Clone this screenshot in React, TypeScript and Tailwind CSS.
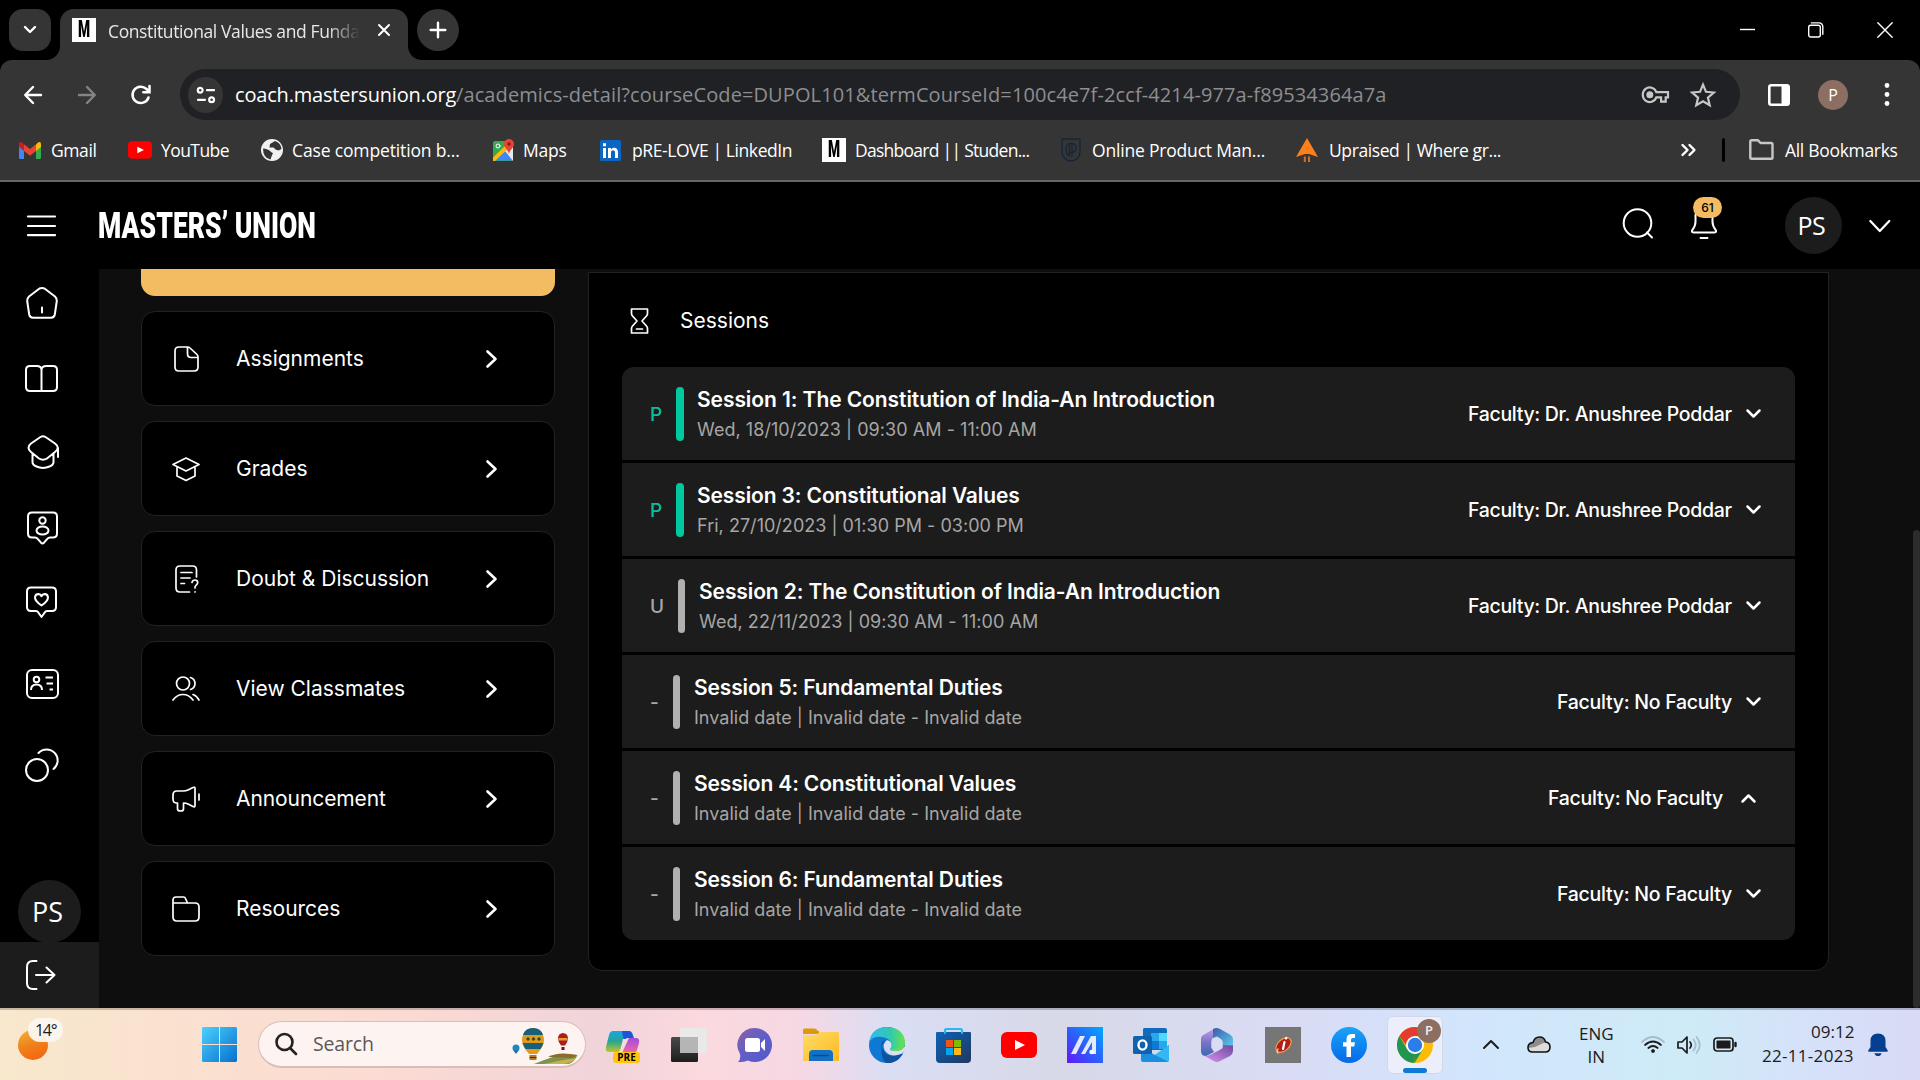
import { useLayoutEffect, useRef, useState, type ReactNode } from "react";

const UI = "font-['Open_Sans','Noto_Sans',sans-serif]";
const INTER = "font-['Inter',sans-serif]";

/* Single line of text whose tracking is tuned so that it fills the given width. */
function Fit({ w, children, className = "", stretch = false }: { w: number; children: string; className?: string; stretch?: boolean }) {
  const ref = useRef<HTMLSpanElement>(null);
  const [natural, setNatural] = useState(0);
  useLayoutEffect(() => {
    if (ref.current) setNatural(ref.current.offsetWidth);
  }, []);
  const style = !natural
    ? undefined
    : stretch
      ? { transform: `scaleX(${w / natural})` }
      : { letterSpacing: `${(w - natural) / children.length}px` };
  return (
    <span className={"block shrink-0 whitespace-nowrap " + className} style={{ width: w }}>
      <span ref={ref} className="inline-block origin-left whitespace-nowrap" style={style}>
        {children}
      </span>
    </span>
  );
}

function Svg({ w, h, vb, children, className = "", sw = 2, color = "#fff", fill = "none" }: { w: number; h: number; vb?: string; children: ReactNode; className?: string; sw?: number; color?: string; fill?: string }) {
  return (
    <svg width={w} height={h} viewBox={vb ?? `0 0 ${w} ${h}`} className={"block shrink-0 overflow-visible " + className} fill={fill} stroke={color} strokeWidth={sw} strokeLinecap="round" strokeLinejoin="round">
      {children}
    </svg>
  );
}

function MFavicon() {
  return (
    <span className="flex h-6 w-6 shrink-0 items-center justify-center bg-white">
      <span className="block scale-x-[0.6] font-['Roboto',sans-serif] text-[23px] leading-6 font-black text-black">M</span>
    </span>
  );
}

/* ---------- browser chrome ---------- */

function TabStrip() {
  return (
    <div className="flex h-[60px] items-start bg-black pl-[9px]">
      <div className="mt-[9px] flex h-[42px] w-[42px] items-center justify-center rounded-[14px] bg-[#353535]">
        <Svg w={12} h={8} sw={2.4}><path d="M1 1l5 5 5-5" /></Svg>
      </div>
      <div className="relative mt-[9px] ml-[9px] flex h-[51px] w-[348px] items-center rounded-t-[14px] bg-[#353535] pb-[9px] pl-3">
        <Svg w={14} h={14} sw={0} fill="#353535" className="absolute bottom-0 -left-[14px]"><path d="M14 0v14H0A14 14 0 0 0 14 0z" /></Svg>
        <Svg w={14} h={14} sw={0} fill="#353535" className="absolute -right-[14px] bottom-0"><path d="M0 0v14h14A14 14 0 0 1 0 0z" /></Svg>
        <MFavicon />
        <div className="mt-[2px] ml-3 w-[252px] [mask-image:linear-gradient(to_right,black_220px,transparent_252px)]">
          <Fit w={252} className={UI + " text-[17.5px] leading-6 text-[#e8e8e8]"}>Constitutional Values and Funda</Fit>
        </div>
        <Svg w={12} h={12} sw={2} className="ml-[18px]"><path d="M1 1l10 10M11 1L1 11" /></Svg>
      </div>
      <div className="mt-[9px] ml-[9px] flex h-[42px] w-[42px] items-center justify-center rounded-full bg-[#353535]">
        <Svg w={16} h={16} sw={2.4}><path d="M8 .7v14.6M.7 8h14.6" /></Svg>
      </div>
      <Svg w={15} h={16} sw={1.4} className="mt-[22px] ml-auto"><path d="M0 7.500h15" strokeLinecap="butt" /></Svg>
      <Svg w={16} h={16} sw={1.4} className="mt-[22px] ml-[53px]"><rect x=".7" y="3.2" width="11.6" height="11.8" rx="2" /><path d="M3.4.9h7.8a3.6 3.6 0 0 1 3.6 3.6v7.8" /></Svg>
      <Svg w={16} h={16} sw={1.4} className="mt-[22px] mr-[27px] ml-[53px]"><path d="M.8.8l14.4 14.4M15.2.8L.8 15.2" /></Svg>
    </div>
  );
}

function Toolbar() {
  return (
    <div className="flex h-[68px] items-center rounded-t-[12px] bg-[#353535] pt-[1px] pl-6">
      <Svg w={18} h={18} sw={2.4}><path d="M17 9H1.6M9 1L1.2 9 9 17" /></Svg>
      <Svg w={18} h={18} sw={2.4} color="#848484" className="ml-[36px]"><path d="M1 9h15.4M9 1l7.8 8L9 17" /></Svg>
      <Svg w={20} h={20} sw={2.5} className="ml-[35px]"><path d="M17.5 12.5A8.2 8.2 0 1 1 15.5 4L18 6.5M18.5 1v6.2h-6.2" strokeLinejoin="miter" /></Svg>
      <div className="ml-[29px] flex h-[51px] w-[1560px] items-center rounded-full bg-[#202124] pl-2">
        <div className="flex h-9 w-[35px] items-center justify-center rounded-full bg-[#353535]">
          <Svg w={18} h={16} sw={2.2}><circle cx="3.2" cy="3.2" r="2.4" /><path d="M10 3.2h7M1 12.8h7" /><circle cx="14.6" cy="12.8" r="2.4" /></Svg>
        </div>
        <Fit w={221} className={UI + " ml-[12px] text-[20px] leading-[26px] text-white"}>coach.mastersunion.org</Fit>
        <Fit w={930} className={UI + " text-[20px] leading-[26px] text-[#8c8e91]"}>/academics-detail?courseCode=DUPOL101&termCourseId=100c4e7f-2ccf-4214-977a-f89534364a7a</Fit>
        <Svg w={27} h={18} sw={2.2} color="#c7c7c7" className="ml-[256px]"><path d="M14.3 6.2H26v5.2h-2.3v4.2h-4.6v-4.2h-4.8A7 7.3 0 1 1 14.3 6.2z" strokeLinejoin="miter" /><circle cx="7.8" cy="8.8" r="2.4" fill="#c7c7c7" /></Svg>
        <Svg w={26} h={26} sw={2.2} color="#c7c7c7" className="ml-[21px]"><path d="M13 2.6l3 7.2 7.8.7-5.9 5.1 1.8 7.6-6.7-4-6.7 4 1.8-7.6L2.2 10.500l7.800-.7z" strokeLinejoin="miter" /></Svg>
      </div>
      <Svg w={22} h={22} sw={2.6} className="ml-[28px]"><rect x="1.300" y="1.300" width="19.400" height="19.400" rx="2" /><path d="M13.500 1.500h7v19h-7z" fill="#fff" stroke="none" /></Svg>
      <div className={UI + " ml-[28px] flex h-[30px] w-[30px] items-center justify-center rounded-full bg-[#8d6e63] text-[16px] leading-none text-white"}>P</div>
      <Svg w={6} h={24} sw={0} fill="#fff" className="ml-[36px]"><circle cx="3" cy="2.500" r="2.400" /><circle cx="3" cy="11.500" r="2.400" /><circle cx="3" cy="20.500" r="2.400" /></Svg>
    </div>
  );
}

const YouTubeMark = ({ w, h }: { w: number; h: number }) => (
  <Svg w={w} h={h} vb="0 0 36 26" sw={0}><rect width="36" height="26" rx="6" fill="#f00" /><path d="M14 8l10 5-10 5z" fill="#fff" /></Svg>
);

const bookmarks: { cell: string; gap: string; w: number; label: string; icon: ReactNode }[] = [
  { cell: "w-[109px]", gap: "ml-[10px]", w: 45, label: "Gmail", icon: (
    <Svg w={22} h={17} sw={0}><path d="M0 2v13.500Q0 17 1.500 17H5V7z" fill="#4285f4" /><path d="M22 2v13.500q0 1.500-1.500 1.500H17V7z" fill="#34a853" /><path d="M17 2.500L19 .6q3-1.600 3 2V5l-5 4z" fill="#fbbc04" /><path d="M5 2.500L3 .6Q0-1 0 2.600V5l5 4z" fill="#c5221f" /><path d="M5 2.300L11 7l6-4.700V9l-6 4.700L5 9z" fill="#ea4335" /></Svg>) },
  { cell: "w-[133px]", gap: "ml-[9px]", w: 68, label: "YouTube", icon: <YouTubeMark w={24} h={20} /> },
  { cell: "w-[232px]", gap: "ml-[9px]", w: 168, label: "Case competition b...", icon: (
    <Svg w={22} h={22} sw={0}><circle cx="11" cy="11" r="11" fill="#f1f1f1" /><path d="M2 9.500q5 .5 7 2.500t3 2l-1.500 3.500-1 3Q2 19 2 9.500zM9 5l5-3q6 2 6.500 8l-3 1.500-3-1-2-2-4 0z" fill="#353535" /></Svg>) },
  { cell: "w-[107px]", gap: "ml-[9px]", w: 44, label: "Maps", icon: (
    <Svg w={21} h={22} sw={0}><rect y="2" width="20" height="20" rx="2" fill="#34a853" /><path d="M1 21.500L11 11l9 10.500z" fill="#4285f4" /><path d="M0 18.500L14 5l3 3L2 22H0z" fill="#fbbc04" /><path d="M20 8v14l-8-10z" fill="#e8eaed" /><path d="M16 0a5 5 0 0 1 5 5c0 4-4 5-5 10-1-5-5-6-5-10a5 5 0 0 1 5-5z" fill="#ea4335" /><circle cx="16" cy="5" r="1.800" fill="#8c1d18" /><circle cx="5" cy="7" r="2" stroke="#fff" strokeWidth="1" /></Svg>) },
  { cell: "w-[222px]", gap: "ml-[11px]", w: 160, label: "pRE-LOVE | LinkedIn", icon: (
    <Svg w={21} h={21} sw={0}><rect width="21" height="21" rx="1.500" fill="#0a66c2" /><path d="M3 8h3v10H3zM3 3.200h3v3H3zM8 8h3v1.500c1.800-3 7-2.400 7 2.500v6h-3v-5.500c0-3-4-3-4 0V18H8z" fill="#fff" /></Svg>) },
  { cell: "w-[239px]", gap: "ml-[9px]", w: 174, label: "Dashboard || Studen...", icon: <MFavicon /> },
  { cell: "w-[235px]", gap: "ml-[11px]", w: 173, label: "Online Product Man...", icon: (
    <Svg w={20} h={24} sw={1.300} color="#15243a"><path d="M1 1h18v13c0 5-4 9-9 9s-9-4-9-9z" /><path d="M8.500 18V6M8.500 18C4 15 4 7 8.500 5.500q6.500-1 6.500 4.300T9 14.500M11 6v12" /></Svg>) },
  { cell: "w-[300px]", gap: "ml-[11px]", w: 172, label: "Upraised | Where gr...", icon: (
    <Svg w={22} h={25} sw={0}><path d="M11 0l11 19-9-3h-4l-9 3z" fill="#fc7f17" /><path d="M7.800 18.500h2V24h-2zM12 18.500h2V24h-2z" fill="#d96c1e" /></Svg>) },
];

function BookmarksBar() {
  return (
    <div className={UI + " flex h-[54px] items-start border-b-2 border-[#666] bg-[#353535] pt-[9px] pl-[19px] text-[17.500px] leading-6 text-white"}>
      <div className="flex h-[26px] w-full items-center">
        {bookmarks.map((b) => (
          <div key={b.label} className={"flex shrink-0 items-center " + b.cell}>
            {b.icon}
            <Fit w={b.w} className={b.gap}>{b.label}</Fit>
          </div>
        ))}
        <Svg w={15} h={12} sw={2.400} className="ml-[85px]"><path d="M1.500 1l5 5-5 5M8.500 1l5 5-5 5" /></Svg>
        <div className="ml-[26px] h-6 w-[3px] rounded-full bg-black" />
        <Svg w={25} h={22} sw={2.400} color="#c7c7c7" className="ml-[24px]"><path d="M1.300 2.500q0-1.300 1.300-1.300h6.200l2.800 2.800h10.600q1.300 0 1.300 1.300v13.200q0 1.300-1.300 1.300H2.600q-1.300 0-1.300-1.300z" /></Svg>
        <Fit w={113} className="ml-[11px]">All Bookmarks</Fit>
      </div>
    </div>
  );
}

/* ---------- site ---------- */

function SiteHeader() {
  return (
    <header className="flex h-[87px] items-center bg-black pl-[27px]">
      <Svg w={29} h={21} sw={2.200}><path d="M1 1.500h27M1 11h27M1 20.200h27" /></Svg>
      <Fit stretch w={218} className="ml-[42px] font-['Roboto',sans-serif] text-[37px] leading-[44px] font-black text-white">MASTERS’ UNION</Fit>
      <Svg w={31} h={30} sw={2} className="mt-[-6px] ml-auto"><circle cx="14.500" cy="15" r="13.800" /><path d="M24 24.500l5 5" /></Svg>
      <div className="relative mt-[-3px] ml-[36px] h-[30px] w-[29px]">
        <Svg w={28} h={30} sw={2}><path d="M5.500 6Q7 0 14 0T22.500 6v7q0 4 3.500 8.500.5 2-2 2H4q-2.500 0-2-2 3.500-4.500 3.500-8.500zM10.500 29h7" /></Svg>
        <div className={INTER + " absolute -top-[12px] left-[3px] flex h-[21px] w-[29px] items-center justify-center rounded-full bg-[#f3bc62] text-[12px] leading-none font-medium text-black"}>61</div>
      </div>
      <div className="ml-[66px] flex h-[57px] w-[57px] items-center justify-center rounded-full bg-[#1c1c1c] pr-[4px] pb-[1px]">
        <Fit w={28} className={UI + " text-[25px] leading-8 text-white"}>PS</Fit>
      </div>
      <Svg w={21} h={12} sw={2.200} className="mr-[30px] ml-[27px]"><path d="M1.300 1l9.500 10L20.300 1" /></Svg>
    </header>
  );
}

const sideIcons: { mt: string; icon: ReactNode }[] = [
  { mt: "mt-[18px]", icon: <Svg w={32} h={32}><path d="M13.500 1.500q2.500-1.200 5 0l10.500 8q2 1.800 1.800 4.500l-2 13.500q-.6 3.200-3.800 3.200H7q-3.200 0-3.800-3.200L1.200 14q-.2-2.700 1.800-4.500zM16 20.500v5" /></Svg> },
  { mt: "mt-[46px]", icon: <Svg w={33} h={27} className="-ml-[1px]"><path d="M16.500 5q0-4 5-4H28q4 0 4 4v17q0 4-4 4H5q-4 0-4-4V5q0-4 4-4h6.500q5 0 5 4v21" /></Svg> },
  { mt: "mt-[43px]", icon: <Svg w={33} h={34} className="-ml-[.5px]"><path d="M14.500 2q2.500-1.500 5 0l9.500 6.500q5.500 4 0 8.500l-8 6.500q-4 2.500-8 0L5 17q-5-4.500 0-8.500zM6.500 18.500V27q0 3 4 4.500 6.500 2.800 13 0 4-1.500 4-4.500v-8.500M32 13v9" /></Svg> },
  { mt: "mt-[42px]", icon: <Svg w={31} h={34} className="ml-[1px]"><path d="M5 1.500h21q4 0 4 4v17q0 4-4 4h-3q-1.500 0-2.500 1.200l-3.500 4q-1.500 1.500-3 0l-3.500-4Q9.500 26.500 8 26.500H5q-4 0-4-4v-17q0-4 4-4z" /><circle cx="15.500" cy="9.500" r="3.200" /><ellipse cx="15.500" cy="19.500" rx="6" ry="4" /></Svg> },
  { mt: "mt-[41px]", icon: <Svg w={31} h={31}><path d="M5 1.500h21q4 0 4 4V21q0 4-4 4h-5q-1.500 0-2 1.200L15.500 31 12 26.200Q11.500 25 10 25H5q-4 0-4-4V5.500q0-4 4-4z" /><path d="M15.500 19.500Q9 15 9 11.500 9.200 8 12.500 8q2 .2 3 2.200 1-2 3-2.200Q21.800 8 22 11.500q0 3.500-6.500 8z" /></Svg> },
  { mt: "mt-[52px]", icon: <Svg w={33} h={30}><rect x="1" y="1" width="31" height="28" rx="5" /><circle cx="10.500" cy="10.500" r="2.800" /><path d="M5 21q0-5.500 5.500-5.500T16 21M19.500 8.500H27M20.500 14.500H27M23.500 20.500H27" strokeLinecap="butt" /></Svg> },
  { mt: "mt-[50px]", icon: <Svg w={34} h={33} className="-ml-[1px]"><circle cx="12" cy="21" r="11" /><path d="M13.500 4A11 11 0 1 1 28.500 20" /></Svg> },
];

function Sidebar() {
  return (
    <aside className="flex w-[99px] shrink-0 flex-col bg-black">
      {sideIcons.map((s, i) => (
        <div key={i} className={"ml-[26px] flex flex-col items-start " + s.mt}>{s.icon}</div>
      ))}
      <div className="mt-auto mb-[-1px] ml-[18px] flex h-[63px] w-[63px] items-center justify-center rounded-full bg-[#1c1c1c] pr-[4px]">
        <Fit w={31} className={UI + " text-[27px] leading-8 text-white"}>PS</Fit>
      </div>
      <div className="h-[66px] w-full shrink-0 bg-[#1c1c1c] pt-[18px] pl-[26px]">
        <Svg w={30} h={30}><path d="M10.500 1H7Q1 1 1 7v16q0 6 6 6h3.500M10 15h18.500M20.500 7.500L28.500 15l-8 7.500" /></Svg>
      </div>
    </aside>
  );
}

const menu: { label: string; w: number; icon: ReactNode }[] = [
  { label: "Assignments", w: 128, icon: <Svg w={28} h={26} sw={1.700}><path d="M7 1h8.500Q17 1 18 2l7 6.500q1 1 1 2.500v10q0 4-4 4H7q-4 0-4-4V5q0-4 4-4zM15.500 1v6.500q0 4 3.500 4h7" /></Svg> },
  { label: "Grades", w: 72, icon: <Svg w={28} h={24} sw={1.700}><path d="M14 1L27 7.500 14 14 1 7.500zM5 10v9l9 4.500 9-4.500v-9" /></Svg> },
  { label: "Doubt & Discussion", w: 193, icon: <Svg w={28} h={28} sw={1.700}><path d="M24.500 12V5q0-4-4-4H8Q4 1 4 5v18q0 4 4 4h9.500M9 7.500h11M9 13h9M9 18.500h3.500M20 17.500q.5-2.500 3-2.500t2.700 2.500q0 1.500-1.500 2.700T23 23M23 26.800v.1" /></Svg> },
  { label: "View Classmates", w: 169, icon: <Svg w={28} h={25} sw={1.700}><circle cx="11" cy="7.500" r="6.500" /><path d="M1 24q4-5.500 10-5.500t10 5.500M18.500 1.500q4.500 1.500 4.500 6t-4.500 6M21 18.500q3.500 1 6 5.500" /></Svg> },
  { label: "Announcement", w: 150, icon: <Svg w={28} h={26} sw={1.700}><path d="M5 5h6q3 0 5-1l5-2.500q2-.8 2 1v17q0 2-2 1l-5-2.500q-2-1-4-1h-.5v6q0 2-3 2t-3-2v-6H5q-4 0-4-4V9q0-4 4-4zM27 8v6" /></Svg> },
  { label: "Resources", w: 104, icon: <Svg w={28} h={26} sw={1.700}><path d="M1 7v14q0 4 4 4h18q4 0 4-4V11q0-4-4-4zM1 7V4q0-3 3-3h7.500q1.500 0 2 1.500L15.500 7" /></Svg> },
];

const sessions = [
  { tag: "P", color: "text-[#06c09c]", box: "w-[26px]", bar: "w-2 bg-[#00c9a0]", gap: "ml-[13px]", title: "Session 1: The Constitution of India-An Introduction", tw: 518, when: "Wed, 18/10/2023 | 09:30 AM - 11:00 AM", ww: 340, fac: "Faculty: Dr. Anushree Poddar", fw: 264 },
  { tag: "P", color: "text-[#06c09c]", box: "w-[26px]", bar: "w-2 bg-[#00c9a0]", gap: "ml-[13px]", title: "Session 3: Constitutional Values", tw: 323, when: "Fri, 27/10/2023 | 01:30 PM - 03:00 PM", ww: 327, fac: "Faculty: Dr. Anushree Poddar", fw: 264 },
  { tag: "U", color: "text-[#a8a8a8]", box: "w-[28px]", bar: "w-[7px] bg-[#b0b0b0]", gap: "ml-[14px]", title: "Session 2: The Constitution of India-An Introduction", tw: 521, when: "Wed, 22/11/2023 | 09:30 AM - 11:00 AM", ww: 339, fac: "Faculty: Dr. Anushree Poddar", fw: 264 },
  { tag: "-", color: "text-[#a8a8a8]", box: "w-[23px]", bar: "w-[7px] bg-[#b0b0b0]", gap: "ml-[14px]", title: "Session 5: Fundamental Duties", tw: 309, when: "Invalid date | Invalid date - Invalid date", ww: 328, fac: "Faculty: No Faculty", fw: 175 },
  { tag: "-", color: "text-[#a8a8a8]", box: "w-[23px]", bar: "w-[7px] bg-[#b0b0b0]", gap: "ml-[14px]", title: "Session 4: Constitutional Values", tw: 322, when: "Invalid date | Invalid date - Invalid date", ww: 328, fac: "Faculty: No Faculty", fw: 175, open: true },
  { tag: "-", color: "text-[#a8a8a8]", box: "w-[23px]", bar: "w-[7px] bg-[#b0b0b0]", gap: "ml-[14px]", title: "Session 6: Fundamental Duties", tw: 309, when: "Invalid date | Invalid date - Invalid date", ww: 328, fac: "Faculty: No Faculty", fw: 175 },
];

function Content() {
  return (
    <main className={INTER + " flex flex-1 items-start bg-[#0e0e0e] pl-[42px] text-white"}>
      <div className="flex w-[414px] flex-col gap-[15px]">
        <div className="h-[27px] rounded-b-[14px] bg-[#f3bc62]" />
        {menu.map((m) => (
          <div key={m.label} className="flex h-[95px] items-center rounded-[14px] border border-[#222] bg-black pl-[30px]">
            {m.icon}
            <Fit w={m.w} className="ml-[36px] text-[21px] leading-7">{m.label}</Fit>
            <Svg w={11} h={18} sw={2.600} className="mr-[57px] ml-auto"><path d="M1.500 1.500L9.500 9l-8 7.500" /></Svg>
          </div>
        ))}
      </div>
      <section className="mt-[3px] ml-[33px] h-[699px] w-[1241px] rounded-b-[14px] border border-[#222] bg-black px-[33px] pt-[34px]">
        <div className="flex h-[28px] items-center">
          <Svg w={20} h={26} sw={1.700} className="ml-[8px]"><path d="M1.500 1h16v4.500q0 1.500-1 2.500L12 13l4.500 5q1 1 1 2.500V25h-16v-4.500q0-1.500 1-2.500L7 13 2.500 8q-1-1-1-2.500zM6.500 21h6" /></Svg>
          <Fit w={89} className="ml-[30px] text-[21px] leading-7">Sessions</Fit>
        </div>
        <div className="mt-[32px] flex w-[1173px] flex-col gap-[3px] overflow-hidden rounded-[12px]">
          {sessions.map((s, i) => (
            <div key={i} className="flex h-[93px] items-center bg-[#1c1c1c] pl-[28px]">
              <span className={"block shrink-0 pt-[2px] text-[19px] leading-6 font-medium " + s.box + " " + s.color}>{s.tag}</span>
              <span className={"block h-[54px] shrink-0 rounded-full " + s.bar} />
              <div className={"pt-[2px] " + s.gap}>
                <Fit w={s.tw} className="text-[21px] leading-[30px] font-semibold">{s.title}</Fit>
                <Fit w={s.ww} className="text-[18px] leading-[30px] text-[#a6a6a6]">{s.when}</Fit>
              </div>
              <Fit w={s.fw} className="ml-auto text-[19.500px] leading-7 font-medium">{s.fac}</Fit>
              {s.open ? (
                <Svg w={15} h={10} sw={2.500} className="mr-[39px] ml-[18px]"><path d="M1.500 8.500l6-6 6 6" /></Svg>
              ) : (
                <Svg w={15} h={10} sw={2.500} className="mr-[34px] ml-[14px]"><path d="M1.500 1.500l6 6 6-6" /></Svg>
              )}
            </div>
          ))}
        </div>
      </section>
      <div className="mt-[261px] ml-auto h-[478px] w-[7px] rounded-full bg-[#2c2c2c]" />
    </main>
  );
}

/* ---------- taskbar ---------- */

const Balloons = () => (
  <Svg w={68} h={46} sw={0}>
    <path d="M22 43q12-5 22-8 10-3 21 0-2 5-8 8z" fill="#7d9450" /><path d="M32 43q18-4 32-6-4 5-12 6z" fill="#c7b24f" /><path d="M36 36q10-6 30-2l-6 3z" fill="#8d6b2f" />
    <circle cx="4" cy="27" r="3.500" fill="#1f86c4" /><path d="M1.500 29.500h5L4 33z" fill="#176c9f" />
    <path d="M10 19a11 12 0 0 1 22 0q0 6-7 14h-8q-7-8-7-14z" fill="#e39a1c" /><path d="M11 14Q13 7 21 7t10 7zM10.500 22h21q-1 3-3 6h-15q-2-3-3-6z" fill="#16607b" /><path d="M14 18l2-2 2 2-2 2zM19.500 18l2-2 2 2-2 2zM25 18l2-2 2 2-2 2z" fill="#274a25" /><path d="M17.500 34h7v5h-7z" fill="#b37a1f" /><path d="M18 36.500h6" stroke="#234" strokeWidth="1" />
    <path d="M46 17.500a5 5.500 0 0 1 10 0q0 3-3 7h-4q-3-4-3-7z" fill="#a81d22" /><path d="M46.500 17h9v2.500h-9z" fill="#e5a024" /><path d="M49.500 26h3v3h-3z" fill="#711" />
  </Svg>
);

const apps: ReactNode[] = [
  <div className="relative h-9 w-9">
    <Svg w={36} h={36} sw={0}>
      <defs>
        <linearGradient id="cpA" x1="0" y1="0" x2="0" y2="1"><stop offset="0" stopColor="#16a4e8" /><stop offset=".5" stopColor="#2aa58f" /><stop offset="1" stopColor="#c3c526" /></linearGradient>
        <linearGradient id="cpB" x1="0" y1="0" x2="0" y2="1"><stop offset="0" stopColor="#a24be0" /><stop offset="1" stopColor="#f2689d" /></linearGradient>
      </defs>
      <path d="M8 4h16q3 0 4 4l1 3h-8l-4 11q-1 3-4 3H4q-4 0-3-5L4 8q1-4 4-4z" fill="url(#cpA)" />
      <path d="M17 4h7q3 0 4.500 7H23q-3 0-4 3z" fill="#1b55d8" />
      <path d="M24 11h7q4 0 3 5l-2 7q-1 3-4 3H17z" fill="url(#cpB)" />
      <path d="M18 12h4l-5 13h-4q2 0 3-5z" fill="#f6dce0" />
    </Svg>
    <div className={UI + " absolute top-[25px] left-[8px] flex h-[11px] w-[27px] items-center justify-center rounded-[3px] bg-[#ffc60a] text-[10px] leading-none font-bold text-black"}>PRE</div>
  </div>,
  <Svg w={36} h={34} sw={0}><defs><linearGradient id="tvA" x1="0" y1="0" x2="0" y2="1"><stop stopColor="#4a4a4a" /><stop offset="1" stopColor="#1d1d1d" /></linearGradient></defs><rect y="9" width="27" height="25" rx="1.500" fill="url(#tvA)" /><rect x="9" y="0" width="27" height="25" rx="1.500" fill="#e9e9e9" /><path d="M9 9h18v16H9z" fill="#b5b5b5" /></Svg>,
  <Svg w={34} h={34} sw={0}><defs><linearGradient id="chA" x1="0" y1="0" x2="1" y2="1"><stop stopColor="#8a62a8" /><stop offset=".5" stopColor="#5f5fc6" /><stop offset="1" stopColor="#5457c9" /></linearGradient></defs><path d="M17 0a17 17 0 1 1-7 32.500Q5 34.500 0 34q3-3 2-8A17 17 0 0 1 17 0z" fill="url(#chA)" /><rect x="7" y="10" width="15" height="14" rx="2.500" fill="#fff" /><path d="M23 15l4-4v12l-4-4z" fill="#fff" /></Svg>,
  <Svg w={36} h={33} sw={0}><defs><linearGradient id="fdA" x1="0" y1="0" x2="1" y2="1"><stop stopColor="#ffdc68" /><stop offset="1" stopColor="#fbba1f" /></linearGradient></defs><path d="M0 2q0-1.500 1.500-1.500H11q1.500 0 2.500 1L16 4H0z" fill="#dc9a05" /><path d="M0 3h16v3H0z" fill="#dc9a05" /><path d="M0 7h12q1.500 0 3-1.500T18 4h16.500Q36 4 36 5.500V33H0z" fill="url(#fdA)" /><path d="M6 33v-7q0-4 4-4h16q4 0 4 4v7z" fill="#1271c4" /><path d="M10 27.500h15" stroke="#0b4a85" strokeWidth="1.500" /></Svg>,
  <Svg w={36} h={36} sw={0}><defs><linearGradient id="edA" x1="0" y1="0" x2="1" y2="0"><stop stopColor="#35b8ee" /><stop offset=".6" stopColor="#31c9b0" /><stop offset="1" stopColor="#6be34b" /></linearGradient></defs><circle cx="18" cy="18" r="18" fill="#0f78d4" /><path d="M0 15Q3 0 18 0q17 1 18 15 0 9-9 9-6 0-6-2 2-2 1.500-5-1-5-7-6.500Q5 8 0 15z" fill="url(#edA)" /><path d="M12 20q0-6 5-7-6 4-3 11 4 6 12 5 4-.5 7-2.500 1 0 0 1.500-5 8-14 8-6-1-7-16z" fill="#10529c" /><path d="M21 22q2-2 1.500-5-.7-3-4.500-4-5 4-2.500 10 4 7 13 5 4-1 6-2.500l3-7-3 2q-2 3-7 3.500-6.500 0-6.500-2z" fill="#dadff3" /><path d="M36 15q0 9-9 9-6 0-6-2 3 1 8-1z" fill="#62de56" /><path d="M14 22q2 8 12 7 4-.5 6.500-2-5 9-15 9-6-4-3.500-14z" fill="#10529c" /></Svg>,
  <Svg w={35} h={36} sw={0}><defs><linearGradient id="stA" x1="0" y1="0" x2="1" y2="1"><stop stopColor="#0c63b8" /><stop offset="1" stopColor="#21385e" /></linearGradient></defs><path d="M0 6q0-1 1-1h33q1 0 1 1v26q0 4-4 4H4q-4 0-4-4z" fill="url(#stA)" /><path d="M9 6V3.500q0-1.500 1.500-1.500h14q1.500 0 1.500 1.500V6" fill="none" stroke="#29b9f0" strokeWidth="2.200" /><path d="M10 13h7v7h-7z" fill="#f1511b" /><path d="M18 13h7v7h-7z" fill="#80bc06" /><path d="M10 21h7v7h-7z" fill="#05a6f0" /><path d="M18 21h7v7h-7z" fill="#fdb813" /></Svg>,
  <YouTubeMark w={36} h={26} />,
  <Svg w={36} h={36} sw={0}><defs><linearGradient id="myA" x1="0" y1="1" x2="1" y2="0"><stop stopColor="#6417f7" /><stop offset=".5" stopColor="#2a62fb" /><stop offset="1" stopColor="#02a9ff" /></linearGradient></defs><path d="M0 0h36v36H0z" fill="url(#myA)" /><path d="M4 27L13 9h5L9 27zM14 27L24 9h5v18h-4V15l-7 12z" fill="#e2eaff" /><circle cx="24.500" cy="25" r="2.200" fill="#fff" /></Svg>,
  <Svg w={36} h={34} sw={0}><path d="M11 0h21q2 0 2 2v20H10V2q0-2 1-2z" fill="#0f6cbd" /><path d="M18 5h8v8h-8z" fill="#28a8ea" /><path d="M26 5h8v8h-8z" fill="#50d9ff" /><path d="M18 13h8v8h-8z" fill="#0f78d4" /><path d="M26 13h8v8h-8z" fill="#28a8ea" /><path d="M8 19l14 8 14-10v15q0 2-2 2H10q-2 0-2-2z" fill="#1a8fe0" /><path d="M22 27l14-10v15q0 1-1 1.500z" fill="#35b8f1" /><rect y="8" width="19" height="18" rx="1.500" fill="#0f62ae" /><ellipse cx="9.500" cy="17" rx="4" ry="4.600" stroke="#fff" strokeWidth="2.400" fill="none" /></Svg>,
  <Svg w={32} h={34} sw={0}>
    <defs>
      <linearGradient id="ofA" x1="0" y1="0" x2="0" y2="1"><stop stopColor="#c39aec" /><stop offset=".5" stopColor="#7b74c4" /><stop offset="1" stopColor="#3f66b4" /></linearGradient>
      <linearGradient id="ofB" x1="0" y1="0" x2="1" y2="1"><stop stopColor="#3a5ca8" /><stop offset="1" stopColor="#5fd0f2" /></linearGradient>
      <linearGradient id="ofC" x1="0" y1="1" x2="1" y2="0"><stop stopColor="#d992ee" /><stop offset="1" stopColor="#6d4aa0" /></linearGradient>
    </defs>
    <path d="M13 .8L3 6.500Q0 8 0 11v12q0 5 5 5l8-4-2.500-4V13q0-3 3-4z" fill="url(#ofA)" />
    <path d="M12 1q3.500-2 7 0l10 5.500q3 2 3 5V20l-10.500-3v-3.500q0-1.500-1.500-2.500l-4-2.500-4 1.500q0-7 0-9z" fill="url(#ofB)" />
    <path d="M32 17.500V23q0 3-3 5l-10 5q-3 2-6.500 0L3 27.500q4 1 8-1.500l9-5q2-1 1.500-4z" fill="url(#ofC)" />
    <path d="M16 10.800l5.500 3.200v6L16 23.200 10.500 20v-6z" fill="#d9dcf3" />
  </Svg>,
  <Svg w={36} h={36} sw={0}><path d="M0 0h36v36H0z" fill="#767676" /><ellipse cx="18.500" cy="18" rx="9" ry="5.600" transform="rotate(-42 18.500 18)" fill="#b01f1a" stroke="#f0a04b" strokeWidth="1.200" /><path d="M18 22l1.500-7M21 11.500l.3-.6" stroke="#fff" strokeWidth="2.200" /><path d="M13 22q-2 2 0 4" stroke="#f6c083" strokeWidth="1.500" /></Svg>,
  <Svg w={36} h={36} sw={0}><defs><linearGradient id="fbA" x1="0" y1="0" x2="0" y2="1"><stop stopColor="#18a4f8" /><stop offset="1" stopColor="#0668e8" /></linearGradient></defs><circle cx="18" cy="18" r="18" fill="url(#fbA)" /><path d="M15.500 30V19.500H12v-4.300h3.500v-3Q15.500 7 21 7h3v4h-2q-2 0-2 2v2.200h4l-.8 4.300H20V30z" fill="#fff" /></Svg>,
];

const Chrome = () => (
  <Svg w={36} h={36} sw={0}><circle cx="18" cy="18" r="18" fill="#fbbc05" /><path d="M2.400 9L10.200 22.500l7.800 4.500-.5 9A18 18 0 0 1 2.400 9z" fill="#219653" /><path d="M17.500 36l8.300-13.500L18 27z" fill="#219653" /><path d="M2.400 9A18 18 0 0 1 33.600 9H18L9 18z" fill="#e33b2e" /><circle cx="18" cy="18" r="9" fill="#fff" /><circle cx="18" cy="18" r="7.200" fill="#2b7de9" /></Svg>
);

function Taskbar() {
  return (
    <footer className={UI + " flex h-[72px] items-center border-t-2 border-black/20 bg-[linear-gradient(to_right,#f8e8cc_0px,#fae2cf_160px,#fbdad3_400px,#f0d4da_600px,#fbd9de_700px,#f6d8e4_800px,#dadef4_890px,#d7d9e8_1060px,#d9dcf5_1300px,#d1e6fc_1480px,#ceebf7_1690px,#d5e2f9_1800px,#d9daf5_1920px)] pb-[1px] text-[#1b1b1b]"}>
      <div className="relative ml-[18px] h-[29px] w-[45px] shrink-0">
        <div className="h-[30px] w-[30px] rounded-full bg-[linear-gradient(160deg,#f0b433,#f07f1b_50%,#f4600f)]" />
        <div className="absolute -top-[12px] left-[10px] flex h-[24px] w-[35px] items-center justify-center rounded-full bg-[#fbf6f0]/95">
          <Fit w={21} className="text-[16px] leading-5">14°</Fit>
        </div>
      </div>
      <Svg w={35} h={35} sw={0} className="ml-[139px]"><defs><linearGradient id="win" x1="0" y1="0" x2="1" y2="1"><stop stopColor="#4cd0fd" /><stop offset="1" stopColor="#0670cf" /></linearGradient></defs><path d="M1 0h16v17H0V1zM18 0h16l1 1v16H18zM0 18h17v17H1l-1-1zM18 18h17v16l-1 1H18z" fill="url(#win)" /></Svg>
      <div className="ml-[21px] flex h-[47px] w-[328px] shrink-0 items-center rounded-full border-[1.500px] border-b-2 border-[#d9bdb9] bg-[#fdf4f2] pl-[16px]">
        <Svg w={22} h={22} sw={2.600} color="#222"><circle cx="9.500" cy="9" r="8" /><path d="M15.500 15.500l5.500 5.500" /></Svg>
        <Fit w={61} className="ml-[16px] text-[19.500px] leading-6 text-[#5c5857]">Search</Fit>
        <div className="ml-[138px]"><Balloons /></div>
      </div>
      <div className="ml-[4px] flex shrink-0">
        {apps.map((a, i) => (
          <div key={i} className="flex h-9 w-[66px] items-center justify-center">{a}</div>
        ))}
      </div>
      <div className="relative ml-[5px] flex h-[58px] w-[56px] shrink-0 items-center justify-center rounded-[6px] border border-[#d3d7e8] bg-[#eceffb]">
        <Chrome />
        <div className="absolute top-[2px] right-[1px] flex h-6 w-6 items-center justify-center rounded-full bg-[#8d6e63] text-[13px] leading-none font-semibold text-[#eee]">P</div>
        <div className="absolute bottom-0 left-[15px] h-[5px] w-6 rounded-full bg-[#0f7ad6]" />
      </div>
      <Svg w={16} h={9} sw={2} color="#1b1b1b" className="ml-[40px]"><path d="M1 8l7-7 7 7" /></Svg>
      <Svg w={24} h={17} sw={0} className="ml-[28px]"><path d="M5.500 16Q1 16 1 11.500T6 6.500Q7.500 1 12.500 1t6 5q4.500.5 4.500 5t-4 5z" fill="#dcdcdc" /><path d="M1.500 12Q1 7 6 6.500 7.500 1 12.500 1t6 5L8 11z" fill="#8d8d8d" /><path d="M5.500 16Q1 16 1 11.500T6 6.500Q7.500 1 12.500 1t6 5q4.500.5 4.500 5t-4 5z" stroke="#111" strokeWidth="1.600" /></Svg>
      <div className="ml-[28px] flex w-[35px] flex-col items-center text-[17px] leading-[23px]">
        <Fit w={35}>ENG</Fit>
        <Fit w={18}>IN</Fit>
      </div>
      <Svg w={24} h={17} sw={1.700} color="#1b1b1b" className="ml-[27px]"><path d="M1 6Q12-4 23 6" stroke="#a9bccb" /><path d="M4 9q8-7 16 0M7.300 12q4.700-4 9.400 0" /><circle cx="12" cy="15" r="1.400" fill="#1b1b1b" stroke="none" /><circle cx="12" cy="15" r="1" /></Svg>
      <Svg w={24} h={18} sw={1.700} color="#1b1b1b" className="ml-[12px]"><path d="M1 6h4l5-5v16l-5-5H1zM13 6q2.500 3 0 6" /><path d="M16.500 3.500q4.500 5.500 0 11M19.500 1q6.500 8 0 16" stroke="#a9bccb" /></Svg>
      <Svg w={24} h={15} sw={1.700} color="#1b1b1b" className="ml-[12px]"><rect x="1" y="1" width="19" height="13" rx="3" /><rect x="3.500" y="3.500" width="14" height="8" rx=".5" fill="#1b1b1b" stroke="none" /><path d="M22.500 6v3" strokeWidth="2.400" /></Svg>
      <div className="ml-[25px] flex w-[92px] flex-col items-end pb-[1px] text-[17px] leading-6">
        <Fit w={43}>09:12</Fit>
        <Fit w={92}>22-11-2023</Fit>
      </div>
      <Svg w={20} h={24} sw={0} className="ml-[14px]"><path d="M10 .5q7.500 0 7.500 7.500v6l2.300 3.500q.4 1.200-1 1.200H1.200q-1.400 0-1-1.200L2.500 14V8Q2.500.5 10 .5zM6.500 20.200h7Q13 23 10 23t-3.500-2.800z" fill="#053f91" /></Svg>
    </footer>
  );
}

export default function App() {
  return (
    <div className="flex h-[1080px] w-[1920px] flex-col overflow-hidden bg-black">
      <TabStrip />
      <Toolbar />
      <BookmarksBar />
      <SiteHeader />
      <div className="flex h-[739px] shrink-0">
        <Sidebar />
        <Content />
      </div>
      <Taskbar />
    </div>
  );
}
